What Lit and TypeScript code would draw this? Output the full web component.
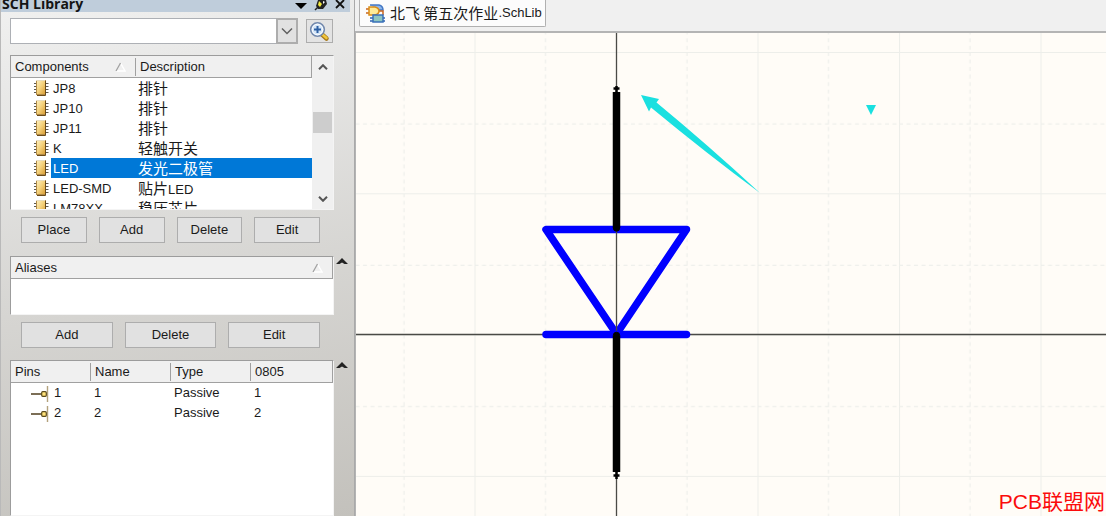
import { LitElement, html, svg, css } from "lit";
import { customElement, state } from "lit/decorators.js";

interface Part {
  name: string;
  description: string;
}

interface Pin {
  designator: string;
  name: string;
  type: string;
  footprint: string;
}

const PARTS: Part[] = [
  { name: "JP8", description: "排针" },
  { name: "JP10", description: "排针" },
  { name: "JP11", description: "排针" },
  { name: "K", description: "轻触开关" },
  { name: "LED", description: "发光二极管" },
  { name: "LED-SMD", description: "贴片LED" },
  { name: "LM78XX", description: "稳压芯片" },
];

const PINS: Pin[] = [
  { designator: "1", name: "1", type: "Passive", footprint: "1" },
  { designator: "2", name: "2", type: "Passive", footprint: "2" },
];

const chipIcon = html`<svg class="chip" width="16" height="17" viewBox="0 0 16 17" aria-hidden="true">
  <defs>
    <linearGradient id="gold" x1="0" y1="0" x2="1" y2="1">
      <stop offset="0" stop-color="#fff2c0" />
      <stop offset="0.5" stop-color="#f3cf78" />
      <stop offset="1" stop-color="#d79a32" />
    </linearGradient>
  </defs>
  <path d="M1 3.5H15.5M1 6.5H15.5M1 9.5H15.5M1 12.5H15.5" stroke="#5a5852" />
  <rect x="3.5" y="0.5" width="9" height="14" fill="url(#gold)" stroke="#b08a48" />
  <path d="M3 0.5H12" stroke="#e8dcc0" />
  <path d="M12.5 1V15.5H4" fill="none" stroke="#6a4a18" />
</svg>`;

const pinIcon = html`<svg class="pin" width="20" height="17" viewBox="0 0 20 17" aria-hidden="true">
  <path d="M1 9H13" stroke="#5b4a2c" stroke-width="1.6" />
  <path d="M17.5 1V17" stroke="#b3a27c" stroke-width="1.4" />
  <rect x="11.7" y="6.7" width="4.6" height="4.6" rx="1" fill="#ffe27a" stroke="#5b4a1c" stroke-width="1.2" />
</svg>`;

const sortIcon = html`<svg class="sort" width="11" height="10" viewBox="0 0 11 10" aria-hidden="true">
  <path d="M5.5 1L10 9H1" fill="none" stroke="#ffffff" stroke-width="1.4" />
  <path d="M1 9L5.5 1" stroke="#a0a0a0" stroke-width="1.3" />
</svg>`;

const upIcon = html`<svg width="10" height="6" viewBox="0 0 10 6" aria-hidden="true">
  <path d="M1 5.2L5 1.2L9 5.2" fill="none" stroke="#555" stroke-width="2" />
</svg>`;

const downIcon = html`<svg width="10" height="6" viewBox="0 0 10 6" aria-hidden="true">
  <path d="M1 0.8L5 4.8L9 0.8" fill="none" stroke="#555" stroke-width="2" />
</svg>`;

const foldIcon = html`<svg width="12" height="7" viewBox="0 0 12 7" aria-hidden="true">
  <path d="M6 0L12 6H8.5L6 4.5L3.5 6H0Z" fill="#222" />
</svg>`;

@customElement("library-panel")
export class LibraryPanel extends LitElement {
  @state() private selected = "LED";

  static styles = css`
    :host {
      display: flex;
      flex-direction: column;
      box-sizing: border-box;
      min-height: 0;
      border-left: 1px solid #b9b9b9;
      border-right: 1px solid #a9a9a9;
      background: linear-gradient(170deg, #f1f1f0 0%, #e9e9e8 15%, #d6d5d2 55%, #c3c1bc 100%);
      font: 13px/20px "Liberation Sans", "Noto Sans CJK SC", sans-serif;
      color: #1a1a1a;
    }
    button {
      font: inherit;
      color: inherit;
      padding: 0;
      box-sizing: border-box;
    }
    .title {
      display: flex;
      justify-content: space-between;
      align-items: flex-end;
      height: 12px;
      margin-right: 4px;
      overflow: hidden;
      background: #bfcddb;
      flex: none;
    }
    .title h1 {
      margin: 0;
      padding-left: 1px;
      font: bold 14px/16px "Open Sans", sans-serif;
      color: #141414;
    }
    .tools {
      display: flex;
      align-items: flex-end;
      gap: 6px;
      margin-right: 4px;
    }
    .tools button {
      display: flex;
      border: 0;
      background: none;
    }
    .search {
      display: flex;
      align-items: center;
      gap: 8px;
      padding: 6px 21px 0 9px;
      flex: none;
    }
    .combo {
      position: relative;
      flex: 1;
      display: flex;
    }
    .combo select {
      appearance: none;
      width: 100%;
      height: 26px;
      border: 1px solid #adb0b5;
      border-radius: 0;
      background: #fff;
      font: inherit;
    }
    .combo svg {
      position: absolute;
      right: 0;
      top: 0;
      pointer-events: none;
    }
    .find {
      display: grid;
      place-items: center;
      width: 27px;
      height: 24px;
      border: 1px solid #adadad;
      background: #e3e3e3;
    }
    .section {
      display: grid;
      grid-template-columns: minmax(0, 1fr) 20px;
      padding-left: 9px;
      flex: none;
    }
    .components {
      margin-top: 11px;
    }
    .aliases {
      margin-top: 13px;
    }
    .pins {
      margin-top: 12px;
      flex: 1;
      min-height: 0;
    }
    .box {
      display: flex;
      box-sizing: border-box;
      overflow: hidden;
      border: 1px solid #f4f4f4;
      border-top-color: #9c9c9c;
      border-left-color: #9c9c9c;
      background: #fff;
    }
    .components .box {
      height: 155px;
    }
    .aliases .box {
      height: 59px;
    }
    table {
      flex: 1;
      align-self: flex-start;
      border-collapse: separate;
      border-spacing: 0;
      table-layout: fixed;
      width: 100%;
    }
    th {
      box-sizing: border-box;
      height: 22px;
      padding: 0 0 0 4px;
      background: #f0f0f0;
      border-bottom: 1px solid #a0a0a0;
      text-align: left;
      font-weight: normal;
    }
    th:last-child {
      border-right: 1px solid #a0a0a0;
    }
    .head {
      display: flex;
      align-items: center;
      justify-content: space-between;
      height: 18px;
      padding-right: 9px;
    }
    th:not(:last-child) .head {
      border-right: 1px solid #a0a0a0;
    }
    td {
      height: 20px;
      padding: 0;
      white-space: nowrap;
    }
    .part {
      display: flex;
      align-items: center;
      height: 20px;
      padding-left: 22px;
    }
    .part span {
      flex: 1;
      margin-left: 2px;
      padding: 1px 0 0 2px;
      line-height: 19px;
    }
    .desc {
      box-sizing: border-box;
      padding: 1px 0 0 2px;
      line-height: 20px;
      height: 20px;
    }
    .cjk {
      font-size: 15px;
    }
    .selected .part span,
    .selected .desc {
      background: #0078d7;
      color: #fff;
    }
    .c-name {
      width: 125px;
    }
    .scroll {
      display: flex;
      flex-direction: column;
      align-items: center;
      width: 21px;
      flex: none;
      background: #f0f0f0;
    }
    .scroll button {
      display: grid;
      place-items: center;
      width: 19px;
      height: 21px;
      border: 0;
      background: none;
    }
    .track {
      flex: 1;
      width: 19px;
      padding-top: 35px;
    }
    .thumb {
      height: 21px;
      background: #cdcdcd;
    }
    .fold {
      align-self: start;
      justify-self: start;
      display: flex;
      margin: 2px 0 0 2px;
      border: 0;
      background: none;
    }
    .actions {
      display: flex;
      justify-content: space-between;
      gap: 12px;
      padding: 7px 34px 0 20px;
      flex: none;
    }
    .actions button {
      flex: 1;
      height: 26px;
      border: 1px solid #adadad;
      background: #e1e1e1;
      line-height: 24px;
    }
    .pins th {
      padding: 0;
    }
    .pins .head {
      padding-left: 4px;
    }
    .pin-cell {
      display: flex;
      align-items: center;
      gap: 4px;
      padding-left: 19px;
    }
    .pins td {
      padding-left: 3px;
    }
    .pins td:first-child {
      padding-left: 0;
    }
    .p-wide {
      width: 80px;
    }
  `;

  render() {
    return html`
      <header class="title">
        <h1>SCH Library</h1>
        <div class="tools">
          <button aria-label="Panel menu">
            <svg width="14" height="12" viewBox="0 0 14 12"><path d="M1 3H13L7 9Z" fill="#000" /></svg>
          </button>
          <button aria-label="Pin panel">
            <svg width="14" height="12" viewBox="0 0 14 12">
              <path d="M4 0L12 0L13 4L9 9H4L2 6Z" fill="#222" />
              <path d="M5 1L8 4L6 7L4 5Z" fill="#f4ea3c" />
              <path d="M9 1L11 2L9 4Z" fill="#fff" />
              <path d="M4 7L1 10" stroke="#222" stroke-width="1.5" />
            </svg>
          </button>
          <button aria-label="Close panel">
            <svg width="12" height="12" viewBox="0 0 12 12">
              <path d="M2 0L10 8M10 0L2 8" stroke="#111" stroke-width="1.8" />
            </svg>
          </button>
        </div>
      </header>

      <div class="search">
        <div class="combo">
          <select aria-label="Component filter">
            <option></option>
          </select>
          <svg width="22" height="26" viewBox="0 0 22 26" aria-hidden="true">
            <rect x="1" y="1" width="20" height="24" fill="#e1e1e1" stroke="#adadad" stroke-width="2" />
            <path d="M6 10.500L11 15.500L16 10.500" fill="none" stroke="#606060" stroke-width="1.5" />
          </svg>
        </div>
        <button class="find" aria-label="Find component">
          <svg width="21" height="21" viewBox="0 0 21 21">
            <path d="M12.500 13L17.500 17.500" stroke="#a87a1c" stroke-width="4.500" stroke-linecap="round" />
            <path d="M14 14L17.500 17" stroke="#f1c63c" stroke-width="2.500" stroke-linecap="round" />
            <circle cx="8.500" cy="8.500" r="6.800" fill="#d5e6f8" stroke="#7288ac" stroke-width="1.600" />
            <circle cx="8.500" cy="8.500" r="5.300" fill="none" stroke="#fff" />
            <path d="M8.500 5V12M5 8.500H12" stroke="#2e60a4" stroke-width="2" />
          </svg>
        </button>
      </div>

      <section class="section components">
        <div class="box">
          <table>
            <colgroup><col class="c-name" /><col /></colgroup>
            <thead>
              <tr>
                <th><div class="head">Components ${sortIcon}</div></th>
                <th><div class="head">Description</div></th>
              </tr>
            </thead>
            <tbody>
              ${PARTS.map(
                (p) => html`<tr
                  class=${p.name === this.selected ? "selected" : ""}
                  @click=${() => (this.selected = p.name)}
                >
                  <td><div class="part">${chipIcon}<span>${p.name}</span></div></td>
                  <td>
                    <div class="desc">
                      <span class="cjk">${p.description.replace("LED", "")}</span>${p.description.includes("LED")
                        ? "LED"
                        : ""}
                    </div>
                  </td>
                </tr>`
              )}
            </tbody>
          </table>
          <div class="scroll">
            <button aria-label="Scroll up">${upIcon}</button>
            <div class="track"><div class="thumb"></div></div>
            <button aria-label="Scroll down">${downIcon}</button>
          </div>
        </div>
      </section>
      <div class="actions">
        <button>Place</button><button>Add</button><button>Delete</button><button>Edit</button>
      </div>

      <section class="section aliases">
        <div class="box">
          <table>
            <thead>
              <tr><th><div class="head">Aliases ${sortIcon}</div></th></tr>
            </thead>
          </table>
        </div>
        <button class="fold" aria-label="Collapse aliases">${foldIcon}</button>
      </section>
      <div class="actions">
        <button>Add</button><button>Delete</button><button>Edit</button>
      </div>

      <section class="section pins">
        <div class="box">
          <table>
            <colgroup><col class="p-wide" /><col class="p-wide" /><col class="p-wide" /><col /></colgroup>
            <thead>
              <tr>
                ${["Pins", "Name", "Type", "0805"].map((t) => html`<th><div class="head">${t}</div></th>`)}
              </tr>
            </thead>
            <tbody>
              ${PINS.map(
                (p) => html`<tr>
                  <td><div class="pin-cell">${pinIcon}${p.designator}</div></td>
                  <td>${p.name}</td>
                  <td>${p.type}</td>
                  <td>${p.footprint}</td>
                </tr>`
              )}
            </tbody>
          </table>
        </div>
        <button class="fold" aria-label="Collapse pins">${foldIcon}</button>
      </section>
    `;
  }
}

@customElement("schematic-sheet")
export class SchematicSheet extends LitElement {
  static styles = css`
    :host {
      display: block;
      position: relative;
      overflow: hidden;
      background: #fffcf7;
      border-top: 2px solid #b4b4b4;
      border-left: 1px solid #b4b4b4;
    }
    .drawing {
      position: absolute;
      inset: 0;
      width: 100%;
      height: 100%;
    }
    .mark {
      position: absolute;
      right: 1px;
      bottom: 0;
      font: 21px/28px "Liberation Sans", "Noto Sans CJK SC", sans-serif;
      color: #fb0b0b;
    }
  `;

  render() {
    const symbol = svg`
      <g stroke="#0000ff" stroke-width="7.500" stroke-linecap="round" stroke-linejoin="round" fill="none">
        <path d="M190 196.500H330.500L260.500 301Z" />
      </g>
      <path d="M260.500 0V600M0 301.500H3000" stroke="#4a4a46" stroke-width="1.300" />
      <path d="M190 301.500H330.500" stroke="#0000ff" stroke-width="7.500" stroke-linecap="round" />
      <g fill="#000" stroke="#000">
        <path d="M260.500 59V195" stroke-width="7.500" />
        <circle cx="260.500" cy="195" r="3.200" />
        <path d="M260.500 303V439" stroke-width="7.500" />
        <circle cx="260.500" cy="302.500" r="3.200" />
        <path d="M260.500 53V59M257.500 55.500H263.500" stroke-width="2.500" />
        <path d="M260.500 439V446M257.500 442.500H263.500" stroke-width="2.500" />
      </g>`;
    return html`
      <svg class="drawing" role="img" aria-label="LED symbol">
        <defs>
          <pattern id="grid" x="118.500" y="19" width="141.500" height="141.300" patternUnits="userSpaceOnUse">
            <path d="M0.500 0V142M0 0.500H142" stroke="#edeeea" stroke-width="1.2" />
            <path d="M71 0V142M0 72H142" stroke="#eeefeb" stroke-width="1.2" stroke-dasharray="4 3.500" />
          </pattern>
        </defs>
        <rect width="100%" height="100%" fill="url(#grid)" />
        ${symbol}
        <path d="M285 62L303 66L300.500 69.500Q352 112 404 160Q350 120 295 74.500L293 78.500Z" fill="#1ae0e0" />
        <path d="M510 72H520L515 82Z" fill="#1ae0e0" />
      </svg>
      <div class="mark">PCB联盟网</div>
    `;
  }
}

@customElement("app-root")
export class AppRoot extends LitElement {
  static styles = css`
    :host {
      display: grid;
      grid-template-columns: 355px minmax(0, 1fr);
      height: 100vh;
      overflow: hidden;
      background: #f0f0f0;
    }
    .editor {
      display: flex;
      flex-direction: column;
      min-height: 0;
    }
    .tabs {
      display: flex;
      height: 31px;
      padding-left: 4px;
      flex: none;
    }
    .tab {
      display: flex;
      align-items: center;
      box-sizing: border-box;
      height: 27px;
      padding: 0 3px 0 5px;
      border: 1px solid #b0b0b0;
      border-top: 0;
      border-radius: 0 0 2px 2px;
      background: #fcfcfc;
      color: #1a1a1a;
      text-decoration: none;
      white-space: pre;
      font: 15px/26px "Noto Sans CJK SC", sans-serif;
    }
    .tab svg {
      margin-right: 4px;
    }
    .ext {
      font: 13px/26px "Liberation Sans", sans-serif;
    }
    schematic-sheet {
      flex: 1;
    }
  `;

  render() {
    return html`
      <library-panel></library-panel>
      <main class="editor">
        <nav class="tabs">
          <a class="tab" href="#sheet"
            ><svg width="21" height="20" viewBox="0 0 21 20" aria-hidden="true">
              <path d="M5 2H14Q18 3 18 7H13" fill="#8db7ec" stroke="#4478c4" stroke-width="1.500" />
              <path d="M1 6H5M1 10H5M13 8H18V12" fill="none" stroke="#c8641c" stroke-width="1.500" />
              <path d="M4 4H10Q14 5 14 8Q14 11 10 12H4Z" fill="#ffeb96" stroke="#d98c18" stroke-width="1.500" />
              <path d="M5 15H9M5 18H9M17 15H20M17 18H20" stroke="#2d62b4" stroke-width="1.500" />
              <path d="M8 12H18V19H8Z" fill="#8fc6c0" stroke="#3a70b8" stroke-width="1.500" /></svg
            >北飞 第五次作业<span class="ext">.SchLib</span></a
          >
        </nav>
        <schematic-sheet id="sheet"></schematic-sheet>
      </main>
    `;
  }
}
